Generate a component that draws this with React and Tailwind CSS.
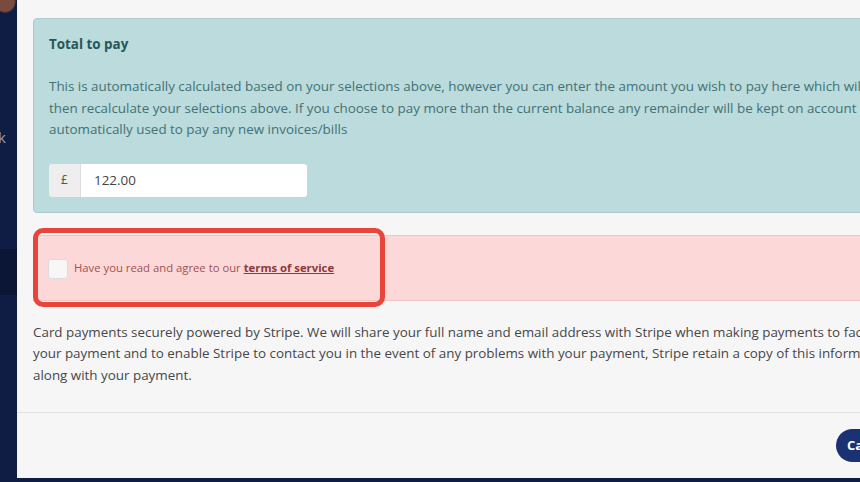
import React from 'react';

function Sidebar() {
  return (
    <div className="w-[17px] shrink-0 h-full bg-[#0f1d44] relative overflow-hidden">
      {/* avatar, mostly cut off */}
      <div className="absolute -left-[6px] -top-[9px] w-[22px] h-[22px] rounded-full bg-[#7a4a3e] border border-[#3b2a40]" />
      <div className="pt-[126px] -ml-[2px] text-[15px] text-[#8f9ab5]">k</div>
      <div className="mt-[100px] h-[46px] bg-[#0b1636]" />
    </div>
  );
}

function TotalToPay() {
  return (
    <div className="w-[900px] bg-[#bbdbdc] border border-[#a9cbcc] rounded-[4px] px-[15px] pt-[15px] pb-[15px] text-[#427276]">
      <div className="text-[13.4px] leading-[20px] font-bold text-[#25575a]">Total to pay</div>
      <p className="mt-[22px] text-[13.4px] leading-[21.5px] whitespace-nowrap">
        This is automatically calculated based on your selections above, however you can enter the amount you wish to pay here which will
        <br />
        then recalculate your selections above. If you choose to pay more than the current balance any remainder will be kept on account and
        <br />
        automatically used to pay any new invoices/bills
      </p>
      <div className="mt-[23px] flex w-[258px] h-[33px] rounded-[3px] overflow-hidden">
        <div className="w-[32px] bg-[#eeeeee] border-r border-[#dddddd] flex items-center justify-center text-[12px] text-[#555]">£</div>
        <input
          readOnly
          value="122.00"
          className="flex-1 min-w-0 bg-white px-[13px] text-[13.4px] text-[#444] outline-none"
        />
      </div>
    </div>
  );
}

function TermsBox() {
  return (
    <div className="w-[900px] h-[66px] mt-[22px] bg-[#fdd8d8] border-y border-[#f3c4c4] px-[15px] pt-[2px] flex items-center gap-[6px]">
      <span className="w-[20px] h-[20px] bg-[#f7f7f7] border border-[#dcdcdc] rounded-[3px] shrink-0" />
      <span className="text-[11.3px] text-[#a05252]">
        Have you read and agree to our{' '}
        <a href="#" className="font-bold underline text-[#8c3a3a]">terms of service</a>
      </span>
    </div>
  );
}

export default function App() {
  return (
    <div className="w-[860px] h-[482px] bg-[#0f1d44] flex overflow-hidden font-['Open_Sans',sans-serif]">
      <Sidebar />
      <div className="flex-1 h-[478px] bg-[#f6f6f7] flex flex-col overflow-hidden relative">
        <div className="pl-[16px] pt-[18px] pb-[26px] border-b border-[#e2e2e4]">
          <TotalToPay />
          <TermsBox />
          <p className="mt-[21px] text-[13.4px] leading-[21.5px] text-[#474747] whitespace-nowrap">
            Card payments securely powered by Stripe. We will share your full name and email address with Stripe when making payments to facilitate
            <br />
            your payment and to enable Stripe to contact you in the event of any problems with your payment, Stripe retain a copy of this information
            <br />
            along with your payment.
          </p>
        </div>
        <div className="flex-1 flex items-center">
          <button className="ml-[819px] shrink-0 h-[33px] px-[11px] rounded-full bg-[#1a3272] text-white text-[13px] font-bold whitespace-nowrap">Cancel</button>
        </div>
        {/* red highlight around terms checkbox */}
        <div className="absolute left-[16px] top-[228px] w-[352px] h-[79px] border-[5px] border-[#e9443a] rounded-[10px] pointer-events-none" />
      </div>
    </div>
  );
}
